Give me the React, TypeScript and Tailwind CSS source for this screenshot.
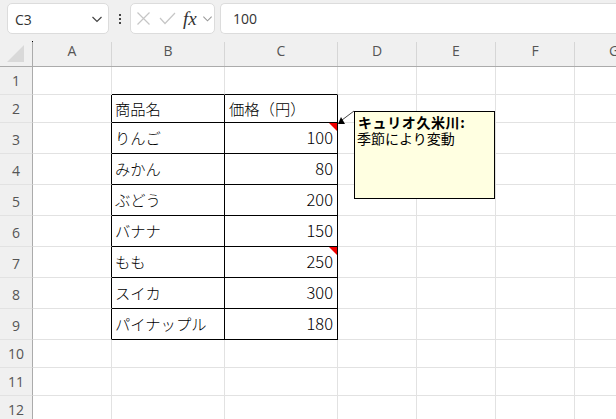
const cjk = "font-['Noto_Sans_CJK_JP','Noto_Sans',sans-serif]";

const columns = [
  { name: "A", w: "w-[79px]" },
  { name: "B", w: "w-[113px]" },
  { name: "C", w: "w-[113px]" },
  { name: "D", w: "w-[79px]" },
  { name: "E", w: "w-[79px]" },
  { name: "F", w: "w-[79px]" },
  { name: "G", w: "w-[79px]" },
];

const rows = [
  { n: 1, h: "h-[28px]" },
  { n: 2, h: "h-[28px]", name: "商品名", price: "価格（円）" },
  { n: 3, h: "h-[31px]", name: "りんご", price: "100", note: true },
  { n: 4, h: "h-[31px]", name: "みかん", price: "80" },
  { n: 5, h: "h-[31px]", name: "ぶどう", price: "200" },
  { n: 6, h: "h-[31px]", name: "バナナ", price: "150" },
  { n: 7, h: "h-[31px]", name: "もも", price: "250", note: true },
  { n: 8, h: "h-[31px]", name: "スイカ", price: "300" },
  { n: 9, h: "h-[31px]", name: "パイナップル", price: "180" },
  { n: 10, h: "h-[28px]" },
  { n: 11, h: "h-[28px]" },
  { n: 12, h: "h-[28px]" },
];

const NoteMark = () => (
  <svg className="absolute top-0 right-0" width="8" height="8" viewBox="0 0 8 8">
    <path d="M0 0H8V8Z" fill="#f00000" />
  </svg>
);

const Chevron = ({ color, size = 12 }: { color: string; size?: number }) => (
  <svg width={size} height={size} viewBox="0 0 12 12" fill="none" stroke={color} strokeWidth="1.2">
    <path d="M1.5 4L6 8.5L10.5 4" />
  </svg>
);

const FormulaBar = () => (
  <div className="h-[42px] flex items-start pt-[3px] pl-[7px] bg-[#f0f0f0]">
    <div className="w-[102px] h-[31px] flex items-center justify-between pl-[7px] pr-[5px] bg-white border border-[#dcdcdc] rounded-[5px] text-[14px] text-[#333]">
      <span className="font-['Open_Sans',sans-serif] mt-[1px]">C3</span>
      <Chevron color="#444" />
    </div>
    <div className="w-[21px] h-[31px] flex flex-col items-center justify-center gap-[2px]">
      <span className="w-[2px] h-[2px] bg-[#444]" />
      <span className="w-[2px] h-[2px] bg-[#444]" />
      <span className="w-[2px] h-[2px] bg-[#444]" />
    </div>
    <div className="w-[85px] h-[31px] flex items-center pl-[6px] bg-white border border-[#dcdcdc] rounded-[5px]">
      <svg width="13" height="13" viewBox="0 0 13 13" fill="none" stroke="#c6c6c6" strokeWidth="1.2">
        <path d="M0.5 0.5L12.5 12.5M12.5 0.5L0.5 12.5" />
      </svg>
      <svg className="ml-[9px]" width="17" height="13" viewBox="0 0 17 13" fill="none" stroke="#c6c6c6" strokeWidth="1.2">
        <path d="M1 6L6 11.5L16 1" />
      </svg>
      <span className="ml-[7px] w-[16px] font-['Liberation_Serif',serif] italic text-[19px] leading-none text-[#333]">fx</span>
      <span className="ml-[3px]">
        <Chevron color="#9a9a9a" size={11} />
      </span>
    </div>
    <div className="ml-[5px] flex-1 h-[31px] flex items-center pl-[12px] bg-white border border-r-0 border-[#dcdcdc] rounded-l-[5px] text-[14px] text-[#333]">
      <span className="font-['Open_Sans',sans-serif]">100</span>
    </div>
  </div>
);

const ColumnHeaders = () => (
  <div className="relative h-[25px] flex bg-[#f0f0f0] border-b border-[#ababab] text-[14px] text-[#555] font-['Open_Sans',sans-serif]">
    <div className="w-[33px] shrink-0 border-r border-[#ababab] flex items-end justify-center pb-[3px]">
      <svg width="18" height="18" viewBox="0 0 18 18">
        <path d="M17 0V17H0Z" fill="#d9d9d9" />
      </svg>
    </div>
    {columns.map((c) => (
      <div key={c.name} className={`${c.w} shrink-0 flex items-center justify-center pb-[8px] border-r border-[#d6d6d6]`}>
        {c.name}
      </div>
    ))}
  </div>
);

const Row = ({ r }: { r: (typeof rows)[number] }) => {
  const inTable = r.n >= 2 && r.n <= 9;
  // 行1の下線と列の区切りは表の範囲だけ黒にする
  const above = r.n === 1;
  return (
    <div className={`${r.h} flex`}>
      <div className="w-[33px] shrink-0 flex items-end justify-center pb-[3px] bg-[#f0f0f0] border-r border-b border-r-[#ababab] border-b-[#e2e2e2] text-[14px] text-[#555] font-['Open_Sans',sans-serif]">
        {r.n}
      </div>
      <div className={`w-[79px] shrink-0 border-b border-b-[#e2e2e2] border-r ${inTable ? "border-r-black" : "border-r-[#e2e2e2]"}`} />
      <div className={`w-[113px] shrink-0 flex items-center pl-[3px] pb-[1px] border-b border-r text-[15.3px] font-light text-black ${cjk} ${inTable || above ? "border-b-black" : "border-b-[#e2e2e2]"} ${inTable ? "border-r-black" : "border-r-[#e2e2e2]"}`}>
        {r.name}
      </div>
      <div className={`relative w-[113px] shrink-0 flex items-center pb-[1px] border-b border-r font-light text-black ${cjk} ${r.n === 2 ? "pl-[4px] text-[15.3px]" : "justify-end pr-[4px] text-[16.5px]"} ${inTable || above ? "border-b-black" : "border-b-[#e2e2e2]"} ${inTable ? "border-r-black" : "border-r-[#e2e2e2]"}`}>
        {r.price}
        {r.note && <NoteMark />}
      </div>
      {["D", "E", "F", "G"].map((c) => (
        <div key={c} className="w-[79px] shrink-0 border-b border-r border-[#e2e2e2]" />
      ))}
    </div>
  );
};

export default function App() {
  return (
    <div className="relative w-[616px] h-[419px] overflow-hidden bg-white">
      <FormulaBar />
      <ColumnHeaders />
      {rows.map((r) => (
        <Row key={r.n} r={r} />
      ))}

      <span className="absolute left-[32px] top-[41px] w-[1px] h-[1px] bg-black" />

      {/* コメント */}
      <svg className="absolute left-[335px] top-[109px]" width="22" height="18" viewBox="0 0 22 18" fill="none">
        <path d="M19 2L7 11" stroke="#444" strokeWidth="1" />
        <path d="M3 15L6 8L10 15Z" fill="#000" />
      </svg>
      <div className={`absolute left-[354px] top-[111px] w-[141px] h-[88px] px-[2px] pt-[2px] bg-[#ffffe1] border border-black text-[14px] leading-[16px] text-black ${cjk}`}>
        <div className="font-bold tracking-[0.6px] pl-[1px]">キュリオ久米川:</div>
        <div>季節により変動</div>
      </div>
    </div>
  );
}
